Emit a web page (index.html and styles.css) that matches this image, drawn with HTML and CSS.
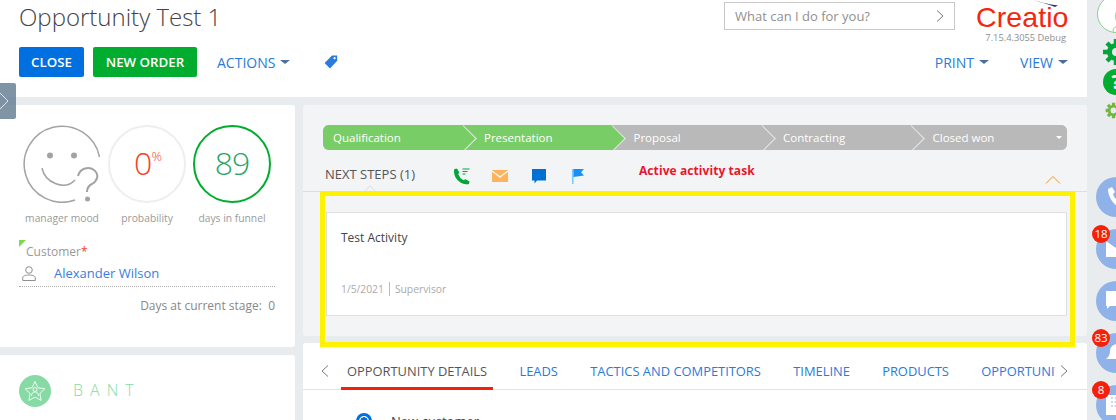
FILE: index.html
```html
<!DOCTYPE html>
<html lang="en">
<head>
<meta charset="utf-8">
<title>Opportunity Test 1</title>
<link rel="stylesheet" href="styles.css">
</head>
<body>
<div class="app">
  <main class="main">
    <header class="header">
      <div class="header-left">
        <h1 class="title">Opportunity Test 1</h1>
        <div class="toolbar">
          <button class="btn btn-blue">CLOSE</button>
          <button class="btn btn-green">NEW ORDER</button>
          <span class="menu menu-actions">ACTIONS<i class="caret"></i></span>
          <svg class="tag" width="14" height="14" viewBox="0 0 14 14"><path fill="#2b7bdc" d="M8 .5h5.2v5.2L6 13.4.6 8z"/><circle cx="10.6" cy="3.2" r="1.1" fill="#fff"/></svg>
        </div>
      </div>
      <div class="header-right">
        <div class="top-right">
          <div class="search"><span>What can I do for you?</span>
            <svg width="8" height="12" viewBox="0 0 8 12"><path d="M1 .5 7 6l-6 5.500" fill="none" stroke="#777" stroke-width="1"/></svg>
          </div>
          <div class="brand">
            <svg class="swoosh" width="24" height="8" viewBox="0 0 24 8"><path d="M0 0C6 2.500 14 4 21 7L24 5.500 17 4.500C11 3.500 5 1.500 0 0Z" fill="#22386f"/></svg>
            <div class="logo">Creatio</div>
            <div class="version">7.15.4.3055 Debug</div>
          </div>
        </div>
        <div class="menus">
          <span class="menu">PRINT<i class="caret"></i></span>
          <span class="menu">VIEW<i class="caret"></i></span>
        </div>
      </div>
    </header>
    <div class="expander"><svg width="9" height="20" viewBox="0 0 9 20"><path d="M0 2 8 10 0 18" fill="none" stroke="#dfe5ea" stroke-width="1"/></svg></div>
    <div class="content">
      <aside class="left">
        <section class="card summary">
          <div class="gauges">
            <figure class="gauge">
              <svg width="78" height="78" viewBox="0 0 78 78">
                <path d="M76.500 32A38 38 0 1 0 52 75" fill="none" stroke="#a3a3a3" stroke-width="1.500"/>
                <circle cx="27" cy="30.500" r="3" fill="#a3a3a3"/><circle cx="51" cy="30.500" r="3" fill="#a3a3a3"/>
                <path d="M19 43C22 58 42 66 52 55" fill="none" stroke="#a3a3a3" stroke-width="1.500"/>
                <path d="M55 51C57 43 66 41 71 45 77 50 74 56 69 59 65 61 64 63 64 67" fill="none" stroke="#a3a3a3" stroke-width="2"/>
                <circle cx="64.500" cy="74" r="2.500" fill="#a3a3a3"/>
              </svg>
              <figcaption>manager mood</figcaption>
            </figure>
            <figure class="gauge">
              <div class="ring ring-grey"><span class="num red">0</span><sup>%</sup></div>
              <figcaption>probability</figcaption>
            </figure>
            <figure class="gauge">
              <div class="ring ring-green"><span class="num green">89</span></div>
              <figcaption>days in funnel</figcaption>
            </figure>
          </div>
          <div class="customer">
            <i class="marker"></i>
            <div class="cust-label">Customer<span class="req">*</span></div>
            <div class="cust-row">
              <svg width="14" height="15" viewBox="0 0 14 15"><circle cx="7" cy="4" r="3.300" fill="none" stroke="#8f8f8f"/><path d="M.7 14.500V12C.7 10 3 9 7 9s6.300 1 6.300 3v2.500z" fill="none" stroke="#8f8f8f"/></svg>
              <a class="cust-link">Alexander Wilson</a>
            </div>
          </div>
          <div class="days">Days at current stage:&nbsp; 0</div>
        </section>
        <section class="card bant">
          <svg width="32" height="32" viewBox="0 0 32 32"><circle cx="16" cy="16" r="16" fill="#86dba5"/><path d="M16 6.500l3 6.300 6.900.9-5 4.800 1.200 6.900-6.100-3.300-6.100 3.300 1.200-6.900-5-4.800 6.900-.9z" fill="none" stroke="#fff" stroke-width=".9"/><circle cx="16" cy="14.500" r="2" fill="none" stroke="#fff" stroke-width=".9"/><path d="M12.500 21c0-3 1.500-4 3.500-4s3.500 1 3.500 4" fill="none" stroke="#fff" stroke-width=".9"/></svg>
          <span class="bant-text">BANT</span>
        </section>
      </aside>
      <div class="right">
        <section class="steps-card">
          <div class="stages">
            <div class="stage done">Qualification</div>
            <div class="stage done">Presentation</div>
            <div class="stage">Proposal</div>
            <div class="stage">Contracting</div>
            <div class="stage last">Closed won<i class="stage-caret"></i></div>
          </div>
          <div class="next-row">
            <span class="next-label">NEXT STEPS (1)</span>
            <svg class="ico-phone" width="17" height="17" viewBox="0 0 17 17"><path d="M2.800 2.500C2.500 9 8 15 14.500 14.500" fill="none" stroke="#00a63a" stroke-width="3.600" stroke-linecap="round"/><path d="M1 2 4 .5 6.500 5 4 6.500zM10.500 13.500 12 11l4.500 2.500-1.500 3z" fill="#00a63a"/><path d="M9.500 1h7M9.500 3.500h5M9.500 6h3" stroke="#00a63a" stroke-width="1.100"/></svg>
            <svg class="ico-mail" width="16" height="12" viewBox="0 0 16 12"><rect width="16" height="12" fill="#ffb35c"/><path d="M0 1l8 6 8-6" fill="none" stroke="#fff" stroke-width="1.200"/></svg>
            <svg class="ico-chat" width="14" height="15" viewBox="0 0 14 15"><path d="M0 0h14v11.500H5L2.500 14.500v-3H0z" fill="#0070d2"/></svg>
            <svg class="ico-flag" width="12" height="15" viewBox="0 0 12 15"><path d="M0 0h1.500v15H0z" fill="#7cc4ff"/><path d="M1.500 0H12L9 3.200 12 6.500 1.500 8z" fill="#1590f5"/></svg>
            <span class="note">Active activity task</span>
            <svg class="ico-up" width="16" height="9" viewBox="0 0 16 9"><path d="M1 8.500 8 1.500l7 7" fill="none" stroke="#f5921e" stroke-width="1"/></svg>
          </div>
          <div class="activity">
            <div class="activity-title">Test Activity</div>
            <div class="activity-meta"><span>1/5/2021</span><span class="meta-owner">Supervisor</span></div>
          </div>
          <div class="highlight"></div>
        </section>
        <section class="details">
          <nav class="tabs">
            <svg width="8" height="12" viewBox="0 0 8 12"><path d="M7 .5 1 6l6 5.500" fill="none" stroke="#777"/></svg>
            <div class="tab-list">
              <a class="tab active">OPPORTUNITY DETAILS</a>
              <a class="tab">LEADS</a>
              <a class="tab">TACTICS AND COMPETITORS</a>
              <a class="tab">TIMELINE</a>
              <a class="tab">PRODUCTS</a>
              <a class="tab">OPPORTUNITIES</a>
            </div>
            <svg width="8" height="12" viewBox="0 0 8 12"><path d="M1 .5 7 6l-6 5.500" fill="none" stroke="#777"/></svg>
          </nav>
          <div class="radio-row"><i class="radio"></i><span>New customer</span></div>
        </section>
      </div>
    </div>
  </main>
  <aside class="rail">
    <svg class="avatar" width="40" height="34" viewBox="0 0 40 34"><circle cx="20" cy="14" r="18.500" fill="#fff" stroke="#8ed08e"/><path d="M18 33c-3-5 2-6 5-8-3-3-4-8-3-12 1-5 7-8 12-6" fill="none" stroke="#8ed08e"/></svg>
    <svg class="gear" width="26" height="26" viewBox="0 0 26 26"><path d="M13 0v26M0 13h26M4 4l18 18M22 4 4 22" stroke="#00a63a" stroke-width="4.500"/><circle cx="13" cy="13" r="9" fill="#00a63a"/><circle cx="13" cy="13" r="4" fill="#e9ecee"/></svg>
    <div class="help">?</div>
    <svg class="gear-small" width="17" height="17" viewBox="0 0 26 26"><path d="M13 1v24M1 13h24M4.500 4.500l17 17M21.500 4.500l-17 17" stroke="#6fb83f" stroke-width="5"/><circle cx="13" cy="13" r="8.500" fill="#6fb83f"/><circle cx="13" cy="13" r="4.500" fill="#e9ecee"/></svg>
    <div class="circles">
      <div class="circle"><svg width="20" height="22" viewBox="0 0 20 22"><path d="M2 3 6 1l3 5-2 2c1 3 2 5 5 6l2-2 5 3v7H15C8 20 2 11 2 3z" fill="#fff"/></svg></div>
      <div class="circle"><span class="badge">18</span><svg width="20" height="16" viewBox="0 0 20 16"><path d="M0 0l20 14v2H0z" fill="#fff"/></svg></div>
      <div class="circle"><svg width="20" height="20" viewBox="0 0 20 20"><path d="M0 0h20v15H4l-3 3v-3H0z" fill="#fff"/></svg></div>
      <div class="circle"><span class="badge">83</span><svg width="20" height="20" viewBox="0 0 20 20"><path d="M0 16c3-2 4-5 4-8 0-4 3-7 8-7h8v15z" fill="#fff"/></svg></div>
      <div class="circle"><span class="badge">8</span><svg width="20" height="20" viewBox="0 0 20 20"><rect width="20" height="20" fill="#fff"/><path d="M5 3h15M5 7h15M5 11h15" stroke="#8fb3e8" stroke-dasharray="2 1.500"/></svg></div>
    </div>
  </aside>
</div>
</body>
</html>
```
FILE: styles.css
```css
* { box-sizing: border-box; }
html, body { margin: 0; height: 100%; overflow: hidden; }
body { font-family: "Open Sans", sans-serif; color: #444; background: #e9ecee; }
.app { display: flex; width: 1116px; height: 420px; overflow: hidden; }
.main { width: 1087px; flex: none; position: relative; }

.header { height: 97px; background: #fff; display: flex; justify-content: space-between; padding-left: 19px; }
.title { margin: 0; font-size: 24px; font-weight: 300; line-height: 33px; color: #444; }
.toolbar { display: flex; align-items: center; margin-top: 14px; height: 30px; }
.btn { border: 0; height: 30px; border-radius: 2px; color: #fff; font: 600 13.300px "Open Sans", sans-serif; padding: 0 11px; }
.btn-blue { background: #0070e0; width: 65px; }
.btn-green { background: #00ad2f; width: 104px; margin-left: 9px; }
.menu { color: #2a7ad9; font-size: 14px; display: inline-flex; align-items: center; }
.menu-actions { margin-left: 20px; }
.caret { width: 0; height: 0; margin-left: 5px; margin-top: -1px; border-left: 5px solid transparent; border-right: 5px solid transparent; border-top: 4px solid #4d6f9e; }
.tag { margin-left: 34px; margin-top: -1px; }

.header-right { width: 363px; padding-right: 19px; }
.top-right { display: flex; padding-top: 2px; }
.search { width: 232px; height: 28px; border: 1px solid #c8c8c8; display: flex; align-items: center; justify-content: space-between; padding: 0 10px; font-size: 13px; color: #8f8f8f; }
.brand { margin-left: 21px; position: relative; width: 92px; }
.swoosh { position: absolute; left: 58px; top: -2px; }
.logo { font: 400 28.500px/28px "Liberation Sans", sans-serif; color: #f5260f; letter-spacing: .1px; padding-top: 1px; height: 28px; white-space: nowrap; }
.version { font-size: 9.300px; line-height: 13px; color: #8f8f8f; margin-top: 1px; text-align: right; margin-right: 2px; white-space: nowrap; }
.menus { display: flex; justify-content: flex-end; gap: 31px; margin-top: 3px; height: 30px; }

.expander { position: absolute; left: 0; top: 83px; width: 16px; height: 36px; background: rgba(104, 130, 150, .85); border-radius: 0 2px 2px 0; display: flex; align-items: center; }

.content { display: flex; gap: 8px; padding-top: 8px; }
.left { width: 295px; flex: none; display: flex; flex-direction: column; gap: 8px; }
.card { background: #fff; border-radius: 0 3px 3px 0; }
.summary { height: 242px; padding: 20px 20px 0 19px; }
.gauges { display: flex; gap: 7px; padding-left: 4px; }
.gauge { margin: 0; width: 78px; display: flex; flex-direction: column; align-items: center; }
.gauge figcaption { font-size: 10.300px; line-height: 14px; color: #9a9a9a; margin-top: 8px; white-space: nowrap; }
.gauge svg { display: block; }
.ring { width: 78px; height: 78px; border-radius: 50%; display: flex; align-items: center; justify-content: center; padding-bottom: 2px; }
.ring-grey { border: 2px solid #eeeeee; padding-left: 2px; }
.ring-green { border: 2px solid #00ad2f; }
.num { font-size: 32px; font-weight: 300; line-height: 40px; letter-spacing: -1px; }
.ring sup { font-size: 13px; font-weight: 300; color: #f5402a; margin-top: -14px; line-height: 14px; }
.red { color: #f5402a; }
.green { color: #2aa36a; }

.customer { position: relative; margin-top: 18px; padding-bottom: 3px; border-bottom: 1px dotted #aaa; }
.marker { position: absolute; left: 0; top: -3px; border-top: 7px solid #7cd94a; border-right: 7px solid transparent; }
.cust-label { padding-left: 7px; font-size: 12px; line-height: 17px; color: #999; }
.req { color: #f5402a; }
.cust-row { display: flex; align-items: center; gap: 18px; margin-top: 3px; padding-left: 3px; height: 20px; }
.cust-link { color: #3a7ddc; font-size: 13px; }
.days { text-align: right; font-size: 12px; line-height: 17px; color: #888; margin-top: 10px; }

.bant { height: 80px; display: flex; align-items: flex-start; gap: 22px; padding: 20px 0 0 19px; }
.bant-text { font-size: 16px; font-weight: 300; letter-spacing: 7px; line-height: 30px; color: #86dba5; }

.right { flex: 1; min-width: 0; display: flex; flex-direction: column; gap: 7px; }
.steps-card { position: relative; height: 231px; background: #f2f4f6; border-radius: 3px; padding: 20px 20px 0 20px; }
.stages { display: flex; width: 744px; height: 25px; border-radius: 6px; overflow: hidden; background: #b9b9b9; }
.stage { position: relative; width: 149.500px; flex: none; padding-left: 20.500px; font-size: 11.500px; line-height: 25px; color: #fff; background: #b9b9b9; }
.stage:first-child { width: 140.500px; padding-left: 10px; }
.stage.done { background: #79cd66; }
.stage::after { content: ""; position: absolute; z-index: 1; right: 0; top: 3.660px; width: 17.700px; height: 17.700px; margin-right: -8.850px; background: inherit; border-top: 1px solid #e6e8ea; border-right: 1px solid #e6e8ea; transform: rotate(45deg); }
.stage.last { flex: 1; }
.stage.last::after { display: none; }
.stage-caret { position: absolute; right: 5px; top: 11px; border-left: 3.500px solid transparent; border-right: 3.500px solid transparent; border-top: 3.500px solid #fff; }

.next-row { position: relative; display: flex; align-items: center; height: 42px; margin: 0 -20px; padding: 11px 22px 0; border-bottom: 1px solid #dcdfe2; }
.next-label { font-size: 13px; color: #555; width: 128px; flex: none; margin-top: -5px; }
.ico-mail { margin-left: 22px; }
.ico-chat { margin-left: 24px; }
.ico-flag { margin-left: 26px; }
.note { margin-left: 55px; margin-top: -11px; font-size: 12px; font-weight: 700; color: #e8172d; letter-spacing: .08px; }
.ico-up { margin-left: auto; margin-right: 4px; margin-top: 7px; }
.next-row::after { content: ""; position: absolute; left: 62px; bottom: -5.500px; width: 9px; height: 9px; background: #f2f4f6; border-left: 1px solid #dcdfe2; border-top: 1px solid #dcdfe2; transform: rotate(45deg); clip-path: polygon(0 0, 100% 0, 0 100%); }

.activity { margin: 20px 0 0 3px; width: 741px; height: 104px; background: #fff; border: 1px solid #dfdfdf; padding: 16px 14px 19px; display: flex; flex-direction: column; justify-content: space-between; }
.activity-title { font-size: 12px; line-height: 17px; color: #444; }
.activity-meta { font-size: 10.300px; line-height: 14px; color: #aaa; display: flex; }
.meta-owner { margin-left: 5px; padding-left: 5px; border-left: 1px solid #bbb; }
.highlight { position: absolute; left: 17px; top: 86px; width: 755px; height: 156px; border: 5px solid #fff200; z-index: 2; }

.details { height: 77px; background: #fff; border-radius: 3px 3px 0 0; }
.tabs { display: flex; align-items: center; height: 47px; padding: 0 19px 0 18px; border-bottom: 1px solid #e2e4e6; }
.tab-list { display: flex; flex: 1; min-width: 0; overflow: hidden; gap: 32.300px; height: 47px; padding-left: 18px; margin-right: 5px; }
.tab { font-size: 12.900px; line-height: 56px; color: #2a7ad9; white-space: nowrap; position: relative; flex: none; }
.tab.active { color: #555; }
.tab.active::after { content: ""; position: absolute; left: -6px; right: -6px; bottom: 0; height: 3px; background: #f5200a; }
.tabs svg { flex: none; margin-top: 10px; }
.radio-row { display: flex; align-items: center; gap: 19px; padding: 22px 0 0 53px; font-size: 13px; color: #444; }
.radio { width: 16px; height: 16px; border-radius: 50%; border: 3px solid #0070e0; background: radial-gradient(circle, #0070e0 0 3.500px, #fff 4px); flex: none; }

.rail { flex: 1; position: relative; overflow: hidden; padding-left: 9px; display: flex; flex-direction: column; }
.rail svg { display: block; flex: none; }
.avatar { width: 40px; }
.gear { margin: 5px 0 0 7px; }
.help { margin: 4px 0 0 7px; width: 26px; height: 26px; flex: none; border-radius: 50%; background: #00ad2f; color: #fff; font: 700 19px/26px "Open Sans", sans-serif; text-align: center; }
.gear-small { margin: 7px 0 0 9px; }
.circles { position: absolute; left: 9px; top: 177px; display: flex; flex-direction: column; gap: 12px; }
.circle { position: relative; width: 40px; height: 40px; border-radius: 50%; background: #8fb3e8; display: flex; align-items: center; padding-left: 10px; flex: none; }
.badge { position: absolute; left: -4px; top: -4px; z-index: 1; min-width: 18px; height: 18px; border-radius: 50%; background: #f5200a; color: #fff; font-size: 11.500px; line-height: 18px; text-align: center; }
```
